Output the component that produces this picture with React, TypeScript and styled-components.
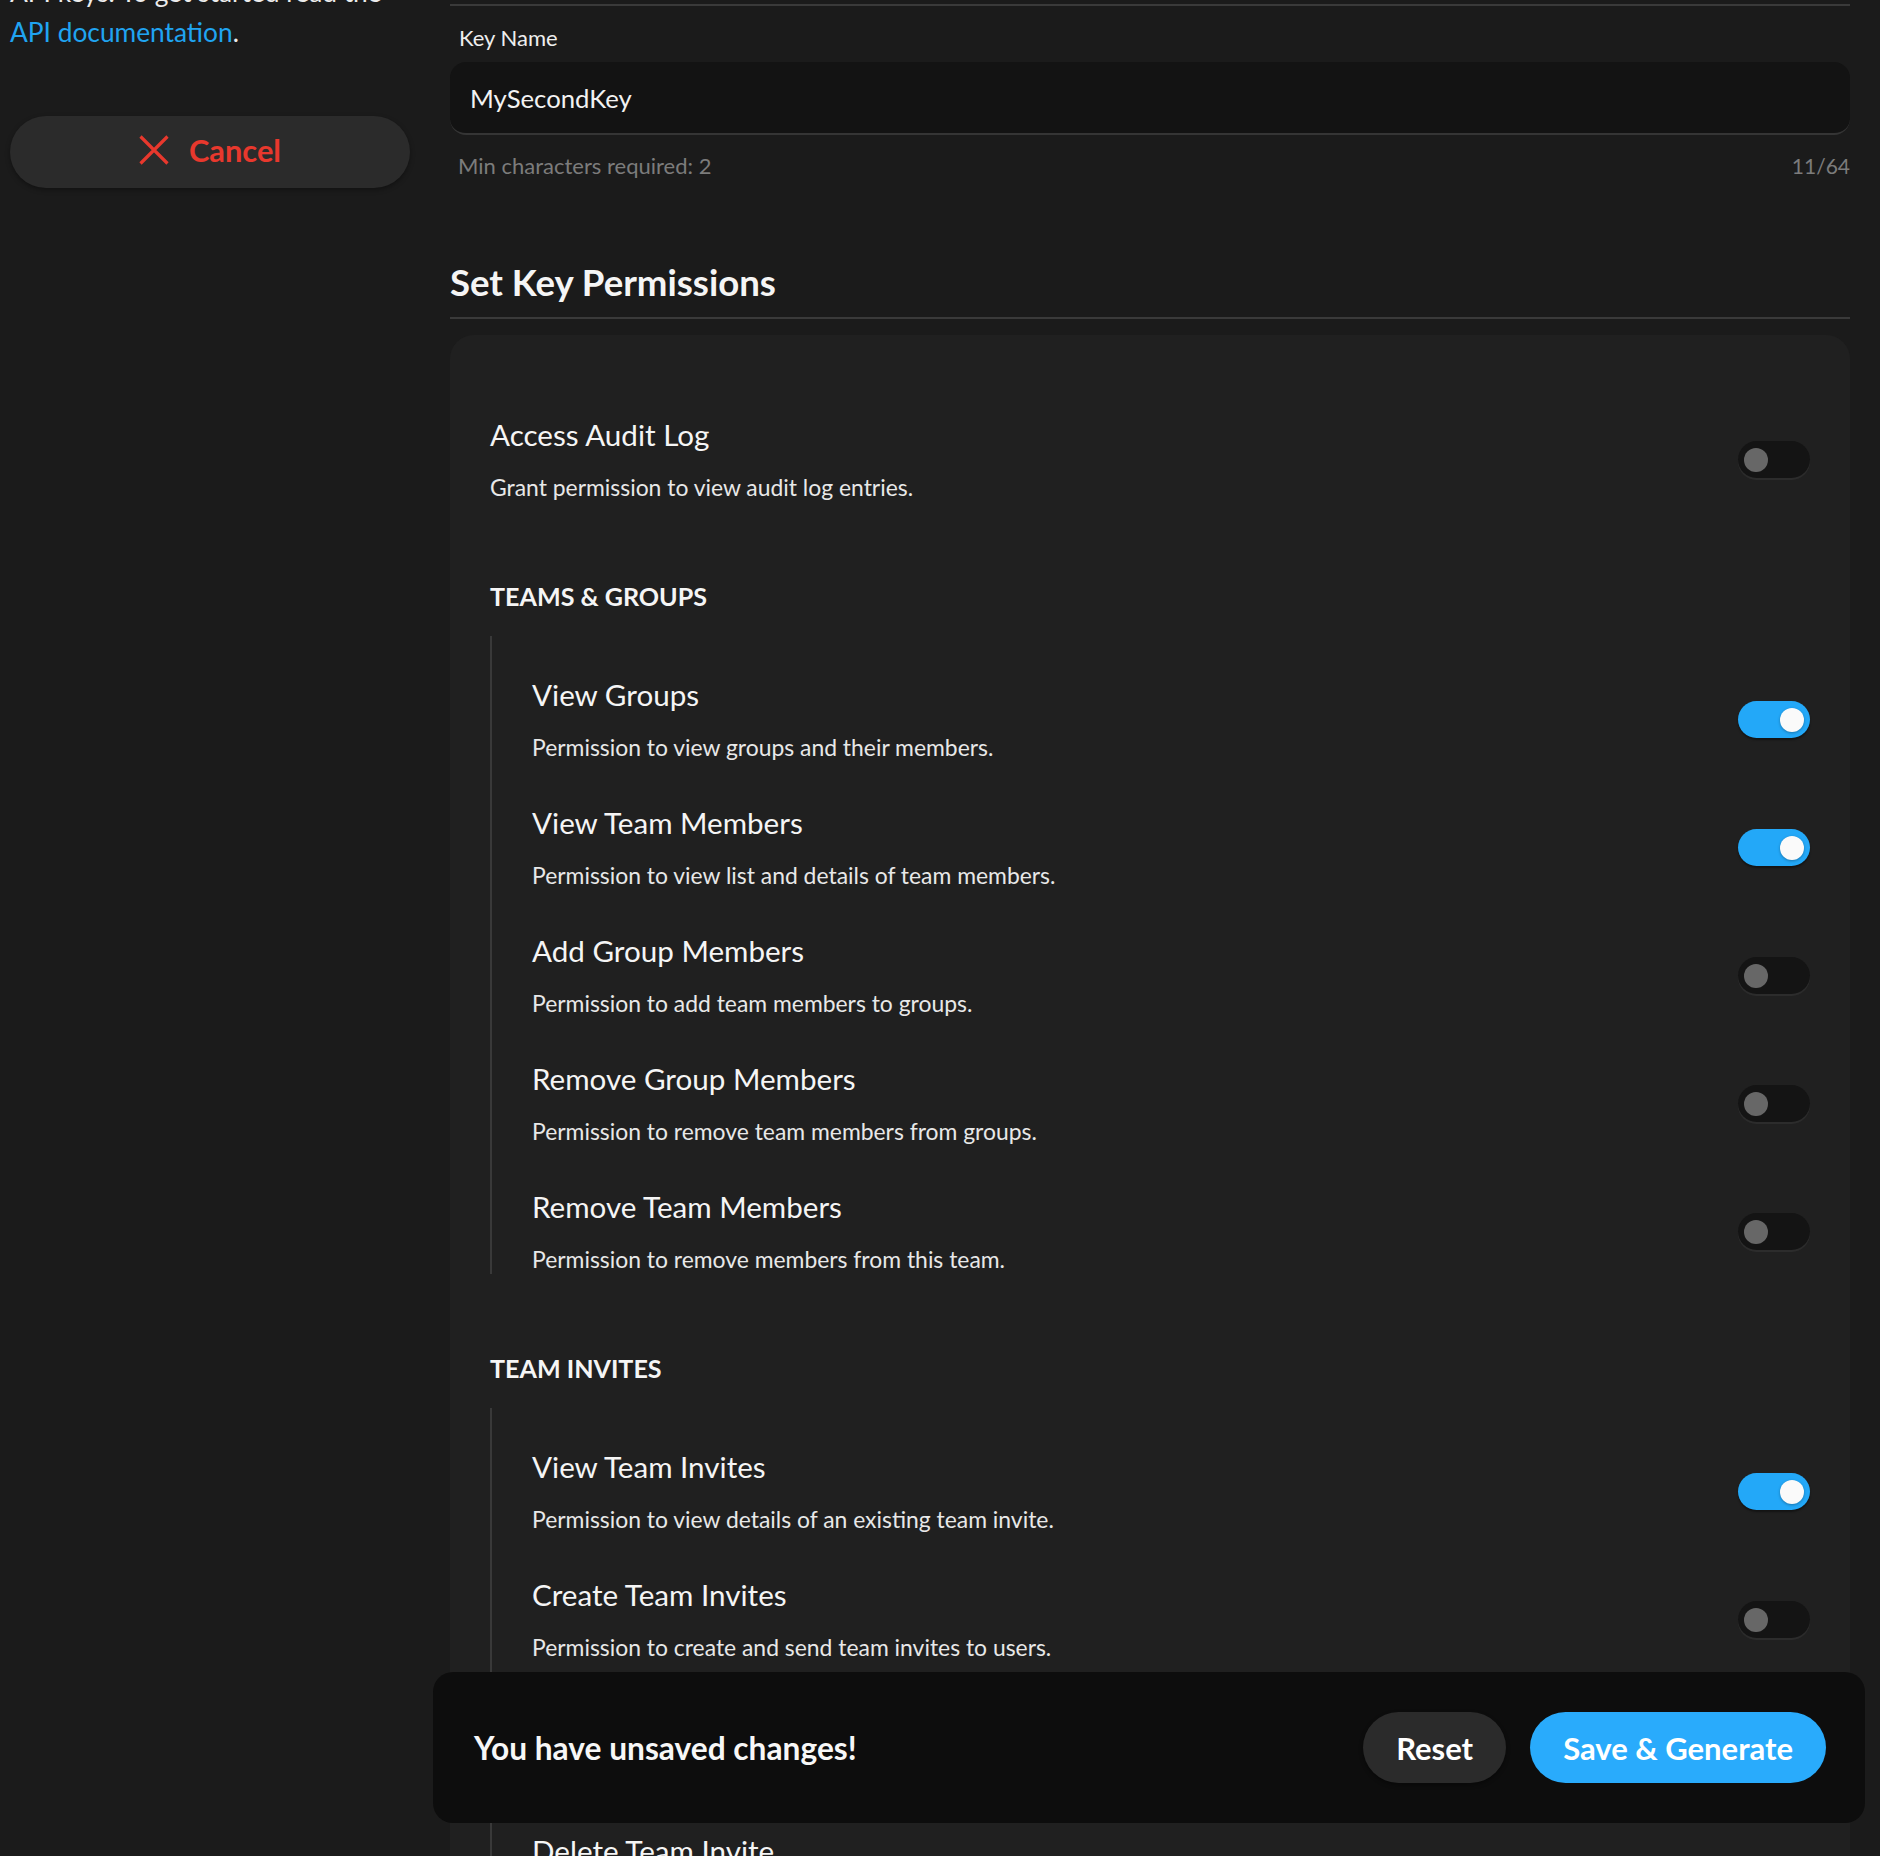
import React from "react";
import styled, { createGlobalStyle } from "styled-components";

const GlobalStyle = createGlobalStyle`
  * { box-sizing: border-box; }
  html, body {
    margin: 0;
    height: 100%;
    overflow: hidden;
    background: #1b1b1b;
  }
  body {
    font-family: Lato, "Noto Sans", sans-serif;
    color: #f3f3f3;
  }
`;

interface Permission {
  id: string;
  title: string;
  description: string;
  enabled: boolean;
}

interface PermissionGroup {
  id: string;
  name: string;
  items: Permission[];
}

const auditLog: Permission = {
  id: "audit",
  title: "Access Audit Log",
  description: "Grant permission to view audit log entries.",
  enabled: false,
};

const groups: PermissionGroup[] = [
  {
    id: "teams",
    name: "TEAMS & GROUPS",
    items: [
      { id: "vg", title: "View Groups", description: "Permission to view groups and their members.", enabled: true },
      { id: "vtm", title: "View Team Members", description: "Permission to view list and details of team members.", enabled: true },
      { id: "agm", title: "Add Group Members", description: "Permission to add team members to groups.", enabled: false },
      { id: "rgm", title: "Remove Group Members", description: "Permission to remove team members from groups.", enabled: false },
      { id: "rtm", title: "Remove Team Members", description: "Permission to remove members from this team.", enabled: false },
    ],
  },
  {
    id: "invites",
    name: "TEAM INVITES",
    items: [
      { id: "vti", title: "View Team Invites", description: "Permission to view details of an existing team invite.", enabled: true },
      { id: "cti", title: "Create Team Invites", description: "Permission to create and send team invites to users.", enabled: false },
      { id: "rti", title: "Resend Team Invites", description: "Permission to resend pending team invites.", enabled: false },
      { id: "dti", title: "Delete Team Invite", description: "Permission to delete an existing team invite.", enabled: false },
    ],
  },
];

const Page = styled.div`
  display: grid;
  grid-template-columns: 400px 1400px;
  column-gap: 40px;
  padding-left: 10px;
  height: 100vh;
  overflow: hidden;
`;

const Aside = styled.aside`
  display: flex;
  flex-direction: column;
`;

const Intro = styled.p`
  margin: -28px 0 0;
  font-size: 26.3px;
  line-height: 40px;
  color: #ececec;

  a {
    color: #20a4f1;
    text-decoration: none;
  }
`;

const CancelButton = styled.button`
  margin-top: 64px;
  height: 72px;
  padding: 0 0 4px;
  border: none;
  border-radius: 36px;
  background: #2b2b2b;
  box-shadow: 0 2px 5px rgba(0, 0, 0, 0.35);
  display: flex;
  align-items: center;
  justify-content: center;
  gap: 20px;
  color: #e8382d;
  font: 700 30.8px Lato, sans-serif;
  cursor: pointer;
`;

const Main = styled.main`
  display: flex;
  flex-direction: column;
  padding-top: 4px;
`;

const Rule = styled.div`
  height: 2px;
  background: #3a3a3a;
`;

const FieldLabel = styled.label`
  margin-top: 17px;
  padding-left: 9px;
  font-size: 22px;
  line-height: 30px;
  color: #eeeeee;
`;

const NameInput = styled.input`
  margin-top: 9px;
  height: 73px;
  padding: 0 20px;
  border: none;
  border-bottom: 2px solid #353535;
  border-radius: 16px;
  background: #131313;
  color: #f2f2f2;
  font: 400 25.7px Lato, sans-serif;
  outline: none;
`;

const HelperRow = styled.div`
  margin-top: 16px;
  padding-left: 8px;
  display: flex;
  justify-content: space-between;
  align-items: baseline;
  font-size: 22px;
  line-height: 30px;
  color: #7c7c7c;
`;

const Counter = styled.span`
  font-size: 21px;
`;

const Heading = styled.h2`
  margin: 79px 0 0;
  padding-bottom: 13px;
  font-size: 36.6px;
  line-height: 44px;
  font-weight: 700;
  color: #f5f5f5;
`;

const Card = styled.section`
  margin-top: 16px;
  padding: 80px 40px 40px;
  background: #202020;
  border-radius: 24px 24px 0 0;
  display: flex;
  flex-direction: column;
`;

const Row = styled.div`
  display: flex;
  align-items: center;
  justify-content: space-between;
`;

const RowText = styled.div`
  display: flex;
  flex-direction: column;
`;

const RowTitle = styled.div`
  font-size: 29.6px;
  line-height: 40px;
  color: #f5f5f5;
`;

const RowDesc = styled.div`
  margin-top: 17px;
  font-size: 22.9px;
  line-height: 30px;
  color: #e8e8e8;
`;

const Toggle = styled.span<{ $on: boolean }>`
  position: relative;
  flex: none;
  width: 72px;
  height: 37px;
  margin-top: 2px;
  border-radius: 19px;
  background: ${({ $on }) => ($on ? "#23a8f8" : "#141414")};
  box-shadow: ${({ $on }) =>
    $on ? "0 2px 2px rgba(0, 0, 0, 0.4)" : "0 2px 0 #2c2c2c"};

  &::after {
    content: "";
    position: absolute;
    top: 6.5px;
    left: ${({ $on }) => ($on ? "42px" : "6px")};
    width: 24px;
    height: 24px;
    border-radius: 50%;
    background: ${({ $on }) => ($on ? "#fafafa" : "#676767")};
    box-shadow: ${({ $on }) => ($on ? "0 1px 3px rgba(0, 0, 0, 0.3)" : "none")};
  }
`;

const Group = styled.div`
  margin-top: 78px;
  display: flex;
  flex-direction: column;
`;

const GroupName = styled.div`
  font-size: 25.1px;
  line-height: 32px;
  font-weight: 700;
  color: #f5f5f5;
`;

const GroupList = styled.div`
  margin-top: 24px;
  padding: 39px 0 0 40px;
  border-left: 2px solid #393939;
  display: flex;
  flex-direction: column;
  gap: 41px;
`;

const UnsavedBar = styled.div`
  position: fixed;
  left: 433px;
  right: 15px;
  bottom: 33px;
  height: 151px;
  padding: 0 39px 0 41px;
  background: #0d0d0d;
  border-radius: 20px;
  display: flex;
  align-items: center;
  gap: 24px;
`;

const UnsavedText = styled.div`
  flex: 1;
  font-size: 31.7px;
  font-weight: 700;
  color: #f7f7f7;
`;

const BarButton = styled.button<{ $primary?: boolean }>`
  height: 71px;
  padding: 0 33px;
  border: none;
  border-radius: 36px;
  background: ${({ $primary }) => ($primary ? "#29abfc" : "#2b2b2b")};
  box-shadow: ${({ $primary }) => ($primary ? "none" : "0 2px 4px rgba(0, 0, 0, 0.4)")};
  color: #ffffff;
  font: 700 31px Lato, sans-serif;
  cursor: pointer;
`;

const CloseIcon = () => (
  <svg width="30" height="30" viewBox="0 0 30 30" fill="none">
    <path d="M1.5 1.5 L28.5 28.5 M28.5 1.5 L1.5 28.5" stroke="#e8382d" strokeWidth="3.2" />
  </svg>
);

const PermissionRow = ({ item }: { item: Permission }) => (
  <Row>
    <RowText>
      <RowTitle>{item.title}</RowTitle>
      <RowDesc>{item.description}</RowDesc>
    </RowText>
    <Toggle $on={item.enabled} role="switch" aria-checked={item.enabled} />
  </Row>
);

export default function App() {
  return (
    <>
      <GlobalStyle />
      <Page>
        <Aside>
          <Intro>
            API keys. To get started read the <a href="#docs">API documentation</a>.
          </Intro>
          <CancelButton>
            <CloseIcon />
            Cancel
          </CancelButton>
        </Aside>

        <Main>
          <Rule />
          <FieldLabel>Key Name</FieldLabel>
          <NameInput defaultValue="MySecondKey" />
          <HelperRow>
            <span>Min characters required: 2</span>
            <Counter>11/64</Counter>
          </HelperRow>

          <Heading>Set Key Permissions</Heading>
          <Rule />

          <Card>
            <PermissionRow item={auditLog} />
            {groups.map((group) => (
              <Group key={group.id}>
                <GroupName>{group.name}</GroupName>
                <GroupList>
                  {group.items.map((item) => (
                    <PermissionRow key={item.id} item={item} />
                  ))}
                </GroupList>
              </Group>
            ))}
          </Card>
        </Main>
      </Page>

      <UnsavedBar>
        <UnsavedText>You have unsaved changes!</UnsavedText>
        <BarButton>Reset</BarButton>
        <BarButton $primary>Save &amp; Generate</BarButton>
      </UnsavedBar>
    </>
  );
}
